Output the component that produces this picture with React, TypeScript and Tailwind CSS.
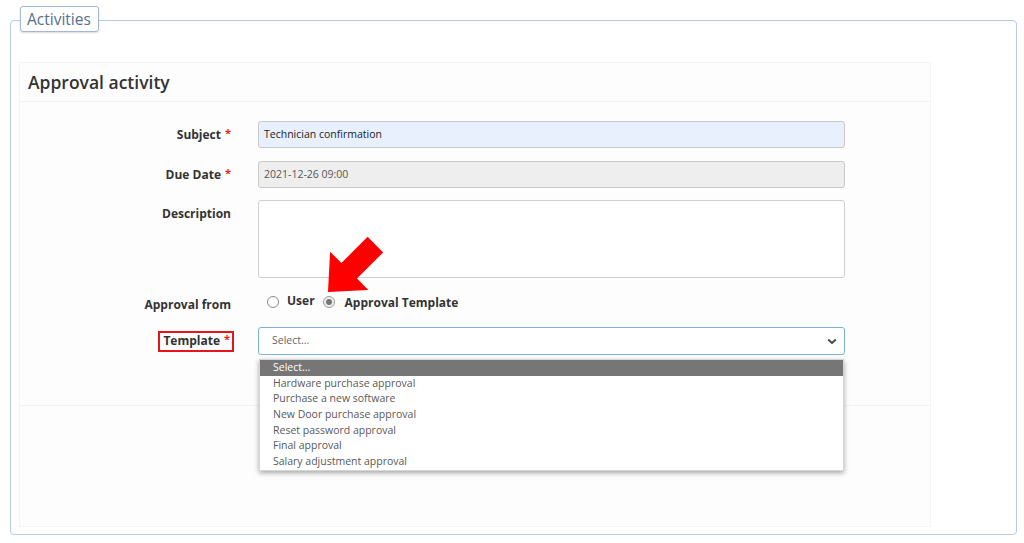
import React from "react";

const items = [
  "Hardware purchase approval",
  "Purchase a new software",
  "New Door purchase approval",
  "Reset password approval",
  "Final approval",
  "Salary adjustment approval",
];

function Star() {
  return <span className="text-[#e02424] text-[11px] relative top-[-2px] ml-[4px] font-bold">*</span>;
}

export default function App() {
  return (
    <div className="relative w-[1024px] h-[543px] overflow-hidden bg-white text-[#333] font-['Open_Sans',sans-serif]">
      <div className="pl-[10px] pt-[20px]">
        <div className="relative w-[1007px] h-[515px] rounded-[4px] border border-[#b8cbe2] pl-[8px] pt-[41px]">
          <div className="absolute top-[-15px] left-[9px] h-[26px] w-[79px] rounded-[3px] border border-[#a3b9d3] bg-white shadow-[0_1px_2px_rgba(0,0,0,0.15)] pl-[6px] text-[15.5px] leading-[25px] text-[#55708e]">
            Activities
          </div>
          <div className="flex h-[465px] w-[912px] flex-col border border-[#f4f4f4] bg-[#fdfdfd]">
            <div className="flex h-[39px] items-center border-b border-[#f2f2f2] pl-[8px] text-[17.5px] font-semibold text-[#333]">
              Approval activity
            </div>
            <div className="h-[303px] pt-[19px]">
              {/* Subject */}
              <div className="flex h-[27px] items-center">
                <div className="w-[211px] pt-[1px] text-right text-[12px] font-bold">
                  Subject<Star />
                </div>
                <div className="ml-[27px] flex h-[27px] w-[587px] items-center rounded-[3px] border border-[#c9c9c9] bg-[#e8f0fe] pl-[5px] text-[10.5px] text-[#222]">
                  Technician confirmation
                </div>
              </div>
              {/* Due date */}
              <div className="mt-[13px] flex h-[27px] items-center">
                <div className="w-[211px] pt-[1px] text-right text-[12px] font-bold">
                  Due Date<Star />
                </div>
                <div className="ml-[27px] flex h-[27px] w-[587px] items-center rounded-[3px] border border-[#c9c9c9] bg-[#eeeeee] pl-[5px] text-[10.5px] text-[#555]">
                  2021-12-26 09:00
                </div>
              </div>
              {/* Description */}
              <div className="mt-[12px] flex h-[78px] items-start">
                <div className="w-[211px] pt-[5px] text-right text-[12px] font-bold">Description</div>
                <div className="ml-[27px] h-[78px] w-[587px] rounded-[3px] border border-[#cfcfcf] bg-white" />
              </div>
              {/* Approval from */}
              <div className="mt-[14px] flex h-[20px] items-center">
                <div className="mt-[6px] w-[211px] text-right text-[12px] font-bold">Approval from</div>
                <div className="ml-[27px] flex items-center pl-[9px] text-[12px] font-bold text-[#333]">
                  <span className="h-[12px] w-[12px] rounded-full border border-[#8a8a8a] bg-white" />
                  <span className="ml-[8px] mt-[-2px]">User</span>
                  <span className="ml-[8px] flex h-[12px] w-[12px] items-center justify-center rounded-full border border-[#9a9a9a] bg-[#f0f0f0]">
                    <span className="h-[6px] w-[6px] rounded-full bg-[#757575]" />
                  </span>
                  <span className="ml-[10px] mt-[1px]">Approval Template</span>
                </div>
              </div>
              {/* Template */}
              <div className="mt-[15px] flex h-[28px] items-center">
                <div className="flex w-[211px] justify-end">
                  <span className="mr-[-3px] flex h-[21px] items-center border-2 border-[#e8141b] pl-[3px] pr-[2px] text-[12px] font-bold">
                    Template<Star />
                  </span>
                </div>
                <div className="relative ml-[27px] h-[28px] w-[587px]">
                  <div className="flex h-[28px] w-[587px] items-center justify-between rounded-[3px] border border-[#7eb0dc] bg-white pl-[13px] pr-[7px] text-[10.5px] text-[#666]">
                    <span>Select...</span>
                    <svg width="10" height="7" viewBox="0 0 10 7">
                      <path d="M1.2 1.5 L5 5 L8.8 1.5" fill="none" stroke="#444" strokeWidth="1.8" />
                    </svg>
                  </div>
                  <div className="absolute left-[1px] top-[32px] z-10 w-[585px] border border-[#d6d6d6] bg-white shadow-[0_2px_5px_rgba(0,0,0,0.35)]">
                    <div className="flex h-[15.7px] items-center bg-[#767676] pl-[13px] text-[10.5px] text-white">Select...</div>
                    {items.map((t) => (
                      <div key={t} className="flex h-[15.7px] items-center pl-[13px] text-[10.5px] text-[#595959]">
                        {t}
                      </div>
                    ))}
                  </div>
                </div>
              </div>
            </div>
            <div className="flex-1 border-t border-[#f2f2f2]" />
          </div>
        </div>
      </div>
      <svg className="absolute left-[320px] top-[232px]" width="70" height="66" viewBox="0 0 70 66">
        <polygon
          points="8,60 10.1,19.7 21.4,31 47.6,4.8 63.2,20.4 37,46.6 48.3,57.9"
          fill="#ff0000"
        />
      </svg>
    </div>
  );
}
